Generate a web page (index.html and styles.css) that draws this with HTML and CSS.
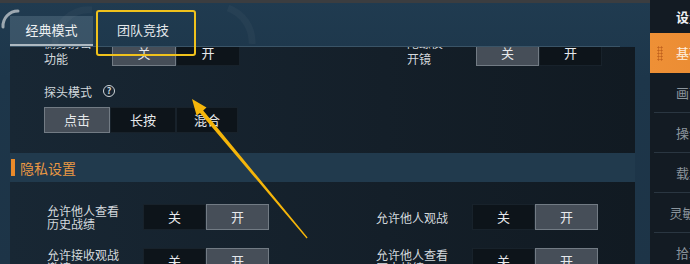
FILE: index.html
```html
<!DOCTYPE html>
<html lang="zh-CN">
<head>
<meta charset="utf-8">
<title>设置</title>
<link rel="stylesheet" href="styles.css">
</head>
<body>
<div class="page">
  <div class="main">
    <div class="strip"></div>
    <div class="tabs">
      <div class="tab active">经典模式</div>
      <div class="tab">团队竞技</div>
    </div>
    <div class="scroll">
      <div class="scroll-inner">
        <section class="panel panel-a">
          <div class="row">
            <div class="label la-left">侧身射击<br>功能</div>
            <div class="seg seg-a"><span class="opt on">关</span><span class="opt">开</span></div>
            <div class="label la-right">陀螺仪<br>开镜</div>
            <div class="seg seg-a2"><span class="opt on">关</span><span class="opt">开</span></div>
          </div>
          <div class="field-label">探头模式<span class="help">?</span></div>
          <div class="seg seg-three"><span class="opt on">点击</span><span class="opt">长按</span><span class="opt">混合</span></div>
        </section>
        <div class="section-head"><span class="bar"></span>隐私设置</div>
        <section class="panel panel-b">
          <div class="row">
            <div class="label lb-left">允许他人查看<br>历史战绩</div>
            <div class="seg seg-b"><span class="opt">关</span><span class="opt on">开</span></div>
            <div class="label lb-right">允许他人观战</div>
            <div class="seg seg-b"><span class="opt">关</span><span class="opt on">开</span></div>
          </div>
          <div class="row row-next">
            <div class="label lb-left">允许接收观战<br>邀请</div>
            <div class="seg seg-b"><span class="opt">关</span><span class="opt on">开</span></div>
            <div class="label lb-right">允许他人查看<br>历史战绩</div>
            <div class="seg seg-b"><span class="opt">关</span><span class="opt on">开</span></div>
          </div>
        </section>
      </div>
    </div>
  </div>
  <aside class="sidebar">
    <div class="side-title">设置</div>
    <div class="side-item active"><span class="grip"></span><span class="side-text">基础</span></div>
    <div class="side-item">画面</div>
    <div class="side-item">操作</div>
    <div class="side-item">载具</div>
    <div class="side-item">灵敏度</div>
    <div class="side-item">拾取</div>
  </aside>
</div>
<svg class="overlay" width="690" height="264" viewBox="0 0 690 264">
  <path d="M3 27 A15 15 0 0 1 18 11" fill="none" stroke="#b4bcc2" stroke-width="3" stroke-linecap="round" opacity="0.85"/>
  <path d="M228 8 A36 36 0 0 1 252 44" fill="none" stroke="#ffffff" stroke-width="7" opacity="0.03"/>
  <path d="M55 44 A34 34 0 0 1 92 10" fill="none" stroke="#ffffff" stroke-width="7" opacity="0.03"/>
  <rect class="mark" x="97" y="11" width="98" height="44" rx="2"/>
  <polygon class="arrow" points="192,99 206.5,107.5 203.2,110.4 307.6,237.6 306.6,238.4 200,113 196.6,115.6"/>
</svg>
</body>
</html>
```
FILE: styles.css
```css
* { box-sizing: border-box; margin: 0; padding: 0; }
html, body { width: 690px; height: 264px; overflow: hidden; background: #1c3245; }
body {
  position: relative;
  font-family: "Noto Sans CJK SC", "Noto Sans", sans-serif;
  color: #d4dade;
}
.page { display: flex; width: 728px; height: 264px; }
.main {
  flex: 0 0 650px;
  display: flex;
  flex-direction: column;
  padding-left: 10px;
  background: linear-gradient(180deg, #203b50 0%, #1d364a 30%, #1d3447 100%);
}
.strip { height: 3px; margin-left: -10px; background: #3b3d40; flex: 0 0 auto; }
.tabs {
  flex: 0 0 44px;
  display: flex;
  align-items: flex-end;
  margin-right: 30px;
  border-bottom: 1px solid #3a5467;
}
.tab {
  width: 100px;
  height: 30px;
  line-height: 28px;
  text-align: center;
  font-size: 13px;
  color: #e3e8eb;
}
.tab.active {
  width: 83px;
  background: rgba(170, 195, 210, 0.2);
  border-bottom: 2px solid #aeb9c1;
  color: #eef1f3;
}
.scroll { flex: 1; overflow: hidden; margin-right: 15px; }
.scroll-inner { margin-top: -14px; }
.panel { background: linear-gradient(90deg, #182734 0%, #141f29 60%, #111a22 100%); }
.panel-a { padding: 7px 0 20px 34px; }
.panel-b { padding: 22px 0 20px 37px; }
.row { display: flex; align-items: center; height: 26px; }
.row-next { margin-top: 18px; }
.label { font-size: 12px; line-height: 14px; color: #d3d9dd; }
.la-left, .la-right { line-height: 16px; margin-top: -4px; }
.la-left { width: 68px; }
.la-right { width: 69px; margin-left: 167px; }
.lb-left { width: 96px; line-height: 13px; }
.lb-right { width: 96px; margin-left: 107px; line-height: 13px; }
.seg { display: flex; height: 26px; }
.opt {
  display: block;
  height: 26px;
  line-height: 24px;
  text-align: center;
  font-size: 13px;
  color: #e6e9ec;
  background: #0d141a;
  border: 1px solid #18222b;
}
.opt.on { background: #464e58; border-color: #727b84; }
.seg-a .opt { width: 64px; }
.seg-a2 .opt { width: 63px; }
.seg-b .opt { width: 63px; }
.seg-three { margin-top: 8px; }
.seg-three .opt { width: 66px; }
.seg-three .opt:last-child { width: 62px; }
.field-label {
  display: flex;
  align-items: center;
  margin-top: 17px;
  height: 16px;
  font-size: 12px;
  color: #d3d9dd;
}
.help {
  width: 12px;
  height: 12px;
  margin-left: 11px;
  border: 1.3px solid #cfd5da;
  border-radius: 50%;
  font-size: 9px;
  line-height: 10px;
  text-align: center;
  font-weight: 700;
  color: #cfd5da;
}
.section-head {
  display: flex;
  align-items: center;
  height: 29px;
  font-size: 14px;
  color: #ea9843;
  background: #213a4d;
  margin-left: -10px;
  padding-left: 11px;
}
.bar { width: 4px; height: 17px; background: #ea8a2a; margin-right: 5px; }
.sidebar {
  flex: 0 0 78px;
  display: flex;
  flex-direction: column;
  background: #131b23;
}
.side-title {
  height: 33px;
  line-height: 33px;
  text-align: center;
  font-size: 13px;
  font-weight: 700;
  color: #eef1f3;
}
.side-item {
  height: 41px;
  line-height: 40px;
  text-align: center;
  font-size: 13px;
  color: #8b959d;
  background: linear-gradient(#2a3641, #2a3641) 4px 100% / calc(100% - 4px) 1px no-repeat;
}
.side-item.active {
  display: flex;
  align-items: center;
  background: linear-gradient(90deg, #ee9036 0%, #e98a32 100%);
  color: #fdf0e2;
}
.grip {
  width: 6px;
  height: 15px;
  margin-left: 7px;
  background: radial-gradient(circle, #c2621d 0.9px, transparent 1.2px) 0 0 / 3px 3px;
}
.side-text { margin-left: 13px; }
.overlay { position: absolute; left: 0; top: 0; pointer-events: none; }
.mark { fill: none; stroke: #f0c21c; stroke-width: 2; }
.arrow { fill: #f5b50a; }
```
